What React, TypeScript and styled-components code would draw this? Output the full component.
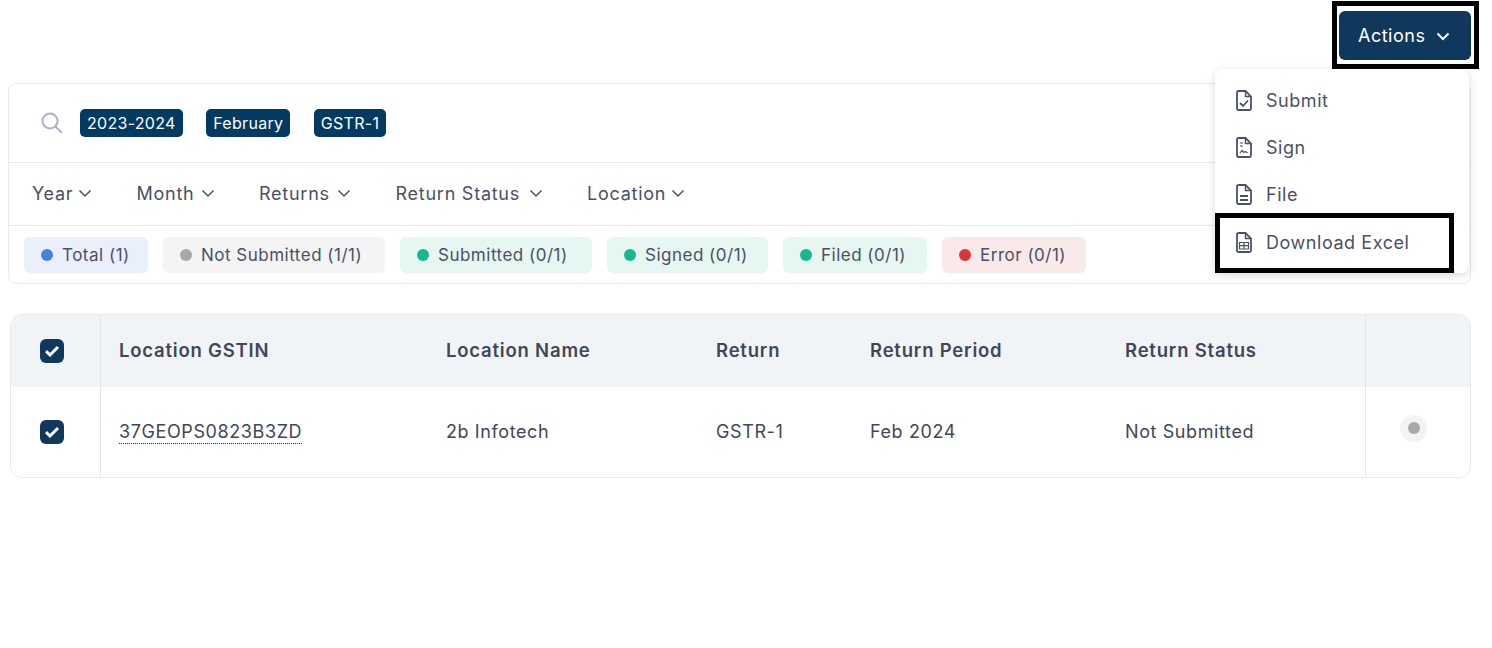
import React from "react";
import styled, { createGlobalStyle } from "styled-components";

const GlobalStyle = createGlobalStyle`
  html, body {
    margin: 0;
    padding: 0;
    background: #fff;
    font-family: "Inter", "Noto Sans", sans-serif;
    color: #41465a;
  }
  * {
    box-sizing: border-box;
  }
`;

const Page = styled.div`
  position: relative;
  width: 1492px;
  height: 648px;
  padding: 1px 21px 0 8px;
  overflow: hidden;
`;

const TopBar = styled.div`
  display: flex;
  justify-content: flex-end;
  height: 82px;
  margin-right: -8px;
`;

const ActionsFrame = styled.div`
  width: 147px;
  height: 68px;
  border: 5px solid #000;
  padding: 5px 3px 4px 2px;
`;

const ActionsButton = styled.button`
  display: flex;
  align-items: center;
  gap: 11px;
  width: 132px;
  height: 49px;
  border: none;
  border-radius: 6px;
  background: #10375c;
  color: #fff;
  padding: 0 0 0 19px;
  font-family: inherit;
  font-size: 18px;
  letter-spacing: 0.5px;
`;

const Menu = styled.div`
  position: absolute;
  top: 69px;
  left: 1215px;
  width: 254px;
  height: 204px;
  background: #fff;
  border-radius: 8px;
  box-shadow: 0 2px 10px rgba(40, 50, 70, 0.18);
  padding-top: 8px;
  z-index: 2;
`;

const MenuItem = styled.div<{ $outlined?: boolean }>`
  display: flex;
  align-items: center;
  gap: 14px;
  height: ${(p) => (p.$outlined ? "60px" : "47px")};
  padding-left: 21px;
  font-size: 18px;
  letter-spacing: 0.55px;
  color: #4a5068;
  ${(p) =>
    p.$outlined &&
    `
    width: 239px;
    margin-top: -5px;
    padding: 0 0 2px 16px;
    border: 5px solid #000;
  `}
`;

const Card = styled.section`
  border: 1px solid #e8e9ec;
  border-radius: 8px;
  width: 1463px;
  height: 201px;
`;

const SearchRow = styled.div`
  display: flex;
  align-items: center;
  height: 79px;
  padding: 0 0 0 32px;
  border-bottom: 1px solid #e8e9ec;
  color: #a9b2c6;
`;

const Tags = styled.div`
  display: flex;
  gap: 23.5px;
  margin-left: 17px;
`;

const Tag = styled.span`
  display: flex;
  align-items: center;
  height: 28px;
  padding: 0 7px;
  border-radius: 5px;
  background: #023a62;
  color: #fff;
  font-size: 16px;
  letter-spacing: 0.3px;
`;

const FilterRow = styled.div`
  display: flex;
  align-items: center;
  gap: 44.5px;
  height: 63px;
  padding: 0 0 2px 23px;
  border-bottom: 1px solid #e8e9ec;
`;

const Filter = styled.div<{ $width: number }>`
  display: flex;
  align-items: center;
  justify-content: space-between;
  width: ${(p) => p.$width}px;
  font-size: 18px;
  letter-spacing: 0.75px;
  color: #4a5068;
`;

const StatusRow = styled.div`
  display: flex;
  align-items: center;
  gap: 15px;
  height: 57px;
  padding-left: 15px;
`;

const Chip = styled.div<{ $bg: string; $width: number }>`
  display: flex;
  align-items: center;
  gap: 9px;
  width: ${(p) => p.$width}px;
  height: 36px;
  padding-left: 17px;
  border-radius: 6px;
  background: ${(p) => p.$bg};
  font-size: 17px;
  letter-spacing: 0.5px;
  color: #4a5068;
`;

const Dot = styled.span<{ $color: string }>`
  width: 12px;
  height: 12px;
  border-radius: 50%;
  background: ${(p) => p.$color};
`;

const Table = styled.section`
  width: 1461px;
  height: 164px;
  margin: 30px 0 0 2px;
  border: 1px solid #e8e9ec;
  border-radius: 12px;
  overflow: hidden;
`;

const GridRow = styled.div<{ $head?: boolean }>`
  display: grid;
  grid-template-columns: 90px 327px 270px 154px 255px 258px 1fr;
  align-items: stretch;
  height: ${(p) => (p.$head ? "72px" : "90px")};
  background: ${(p) => (p.$head ? "#f1f4f7" : "#fff")};
  font-size: ${(p) => (p.$head ? "18.5px" : "18px")};
  font-weight: ${(p) => (p.$head ? 600 : 400)};
  letter-spacing: ${(p) => (p.$head ? "0.8px" : "0.6px")};
  color: #41465a;
`;

const Cell = styled.div`
  display: flex;
  align-items: center;
  padding: 0 0 2px 18px;
`;

const CheckCell = styled.div`
  display: flex;
  align-items: center;
  justify-content: center;
  padding-right: 7px;
  border-right: 1px solid #e2e6ec;
`;

const ActionCell = styled.div`
  display: flex;
  align-items: center;
  justify-content: center;
  padding: 0 9px 8px 0;
  border-left: 1px solid #e2e6ec;
`;

const Checkbox = styled.span`
  display: flex;
  align-items: center;
  justify-content: center;
  width: 24px;
  height: 24px;
  border-radius: 6px;
  background: #10375c;
`;

const GstinLink = styled.span`
  position: relative;
  top: 1px;
  border-bottom: 1px dotted #10375c;
  line-height: 23px;
`;

const StatusHalo = styled.span`
  display: flex;
  align-items: center;
  justify-content: center;
  width: 27px;
  height: 27px;
  border-radius: 50%;
  background: #f3f3f3;
`;

const SearchIcon = () => (
  <svg width="22" height="22" viewBox="0 0 22 22" fill="none" stroke="currentColor" strokeWidth="2">
    <circle cx="9" cy="9" r="7.500" />
    <path d="M14.500 14.500l6.500 6.500" />
  </svg>
);

const Check = () => (
  <svg width="16" height="16" viewBox="0 0 16 16" fill="none">
    <path d="M2 8.200l4 3.800 8-8" stroke="#fff" strokeWidth="3" />
  </svg>
);

const Chevron = ({ weight }: { weight: number }) => (
  <svg width="14" height="14" viewBox="0 0 14 14" fill="none" stroke="currentColor" strokeWidth={weight}>
    <path d="M1.500 4.500l5.500 5.500 5.500-5.500" />
  </svg>
);

const DocIcon = ({ children }: { children: React.ReactNode }) => (
  <svg width="16" height="21" viewBox="0 0 16 21" fill="none" stroke="#4a5068" strokeWidth="1.8">
    <path d="M2.500 1h7l5.500 5.500v12a1.500 1.500 0 0 1-1.500 1.500h-11a1.500 1.500 0 0 1-1.500-1.500v-16a1.500 1.500 0 0 1 1.500-1.500z" />
    <path d="M9.500 1v5.500h5.500" strokeWidth="1.400" />
    {children}
  </svg>
);

const filters = [
  { label: "Year", width: 60 },
  { label: "Month", width: 78 },
  { label: "Returns", width: 92 },
  { label: "Return Status", width: 147 },
  { label: "Location", width: 98 },
];

const chips = [
  { label: "Total (1)", bg: "#e9f0fb", color: "#4a7fe0", width: 124 },
  { label: "Not Submitted (1/1)", bg: "#f4f4f4", color: "#a8a8a8", width: 222 },
  { label: "Submitted (0/1)", bg: "#e6f6f1", color: "#16b98a", width: 192 },
  { label: "Signed (0/1)", bg: "#e6f6f1", color: "#16b98a", width: 161 },
  { label: "Filed (0/1)", bg: "#e6f6f1", color: "#16b98a", width: 144 },
  { label: "Error (0/1)", bg: "#f9e9e8", color: "#d93636", width: 144 },
];

const App = () => {
  return (
    <Page>
      <GlobalStyle />
      <TopBar>
        <ActionsFrame>
          <ActionsButton>
            Actions <Chevron weight={2} />
          </ActionsButton>
        </ActionsFrame>
      </TopBar>

      <Menu>
        <MenuItem>
          <DocIcon>
            <path d="M4 13l3 3 5-5.500" />
          </DocIcon>
          Submit
        </MenuItem>
        <MenuItem>
          <DocIcon>
            <path d="M4 6h3M4 9h3M4 16l2-2.500 2 2 1.500-1 2 1.500" strokeWidth="1.200" />
          </DocIcon>
          Sign
        </MenuItem>
        <MenuItem>
          <DocIcon>
            <path d="M4 12h8M4 16h8" />
          </DocIcon>
          File
        </MenuItem>
        <MenuItem $outlined>
          <DocIcon>
            <path d="M3.500 10.500h9v6.500h-9zM3.500 13.700h9M8 10.500v6.500" strokeWidth="1.200" />
          </DocIcon>
          Download Excel
        </MenuItem>
      </Menu>

      <Card>
        <SearchRow>
          <SearchIcon />
          <Tags>
            <Tag>2023-2024</Tag>
            <Tag>February</Tag>
            <Tag>GSTR-1</Tag>
          </Tags>
        </SearchRow>
        <FilterRow>
          {filters.map((f) => (
            <Filter key={f.label} $width={f.width}>
              {f.label} <Chevron weight={1.5} />
            </Filter>
          ))}
        </FilterRow>
        <StatusRow>
          {chips.map((c) => (
            <Chip key={c.label} $bg={c.bg} $width={c.width}>
              <Dot $color={c.color} />
              {c.label}
            </Chip>
          ))}
        </StatusRow>
      </Card>

      <Table>
        <GridRow $head>
          <CheckCell>
            <Checkbox>
              <Check />
            </Checkbox>
          </CheckCell>
          <Cell>Location GSTIN</Cell>
          <Cell>Location Name</Cell>
          <Cell>Return</Cell>
          <Cell>Return Period</Cell>
          <Cell>Return Status</Cell>
          <ActionCell />
        </GridRow>
        <GridRow>
          <CheckCell>
            <Checkbox>
              <Check />
            </Checkbox>
          </CheckCell>
          <Cell>
            <GstinLink>37GEOPS0823B3ZD</GstinLink>
          </Cell>
          <Cell>2b Infotech</Cell>
          <Cell>GSTR-1</Cell>
          <Cell>Feb 2024</Cell>
          <Cell>Not Submitted</Cell>
          <ActionCell>
            <StatusHalo>
              <Dot $color="#a8a8a8" />
            </StatusHalo>
          </ActionCell>
        </GridRow>
      </Table>
    </Page>
  );
};

export default App;
